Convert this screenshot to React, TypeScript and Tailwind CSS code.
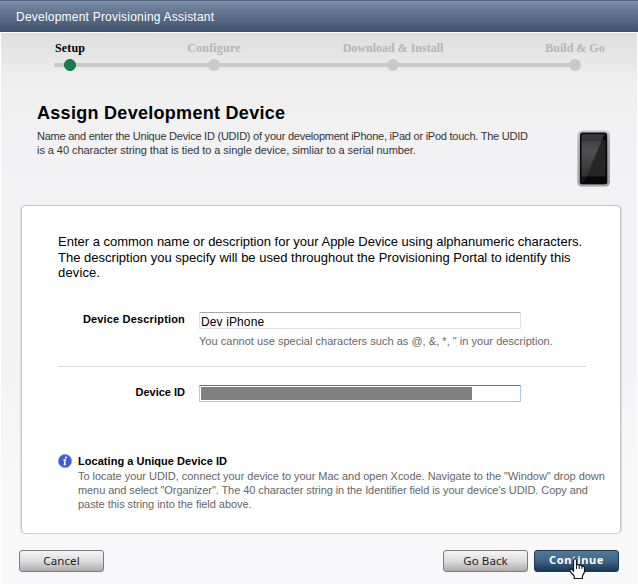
import type { ReactNode } from 'react';

const sans = "font-['Liberation_Sans',Arial,sans-serif]";

function Step({ label, active, className }: { label: string; active?: boolean; className: string }) {
  return (
    <div className={`relative flex flex-col items-center ${className}`}>
      <span
        className={`h-[14px] whitespace-nowrap font-['Liberation_Serif',serif] text-[12px] leading-[14px] font-bold ${active ? 'text-black' : 'text-[#b5b5b5]'}`}
      >
        {label}
      </span>
      <span
        className={`mt-1 size-3 rounded-full ${active ? 'border border-[#16693c] bg-[#1d7d4a]' : 'bg-[#c9c9c9]'}`}
      />
    </div>
  );
}

function Line({ children, className }: { children: ReactNode; className: string }) {
  return <span className={`block whitespace-nowrap ${className}`}>{children}</span>;
}

function DeviceIcon() {
  return (
    <svg width="34" height="58" viewBox="0 0 34 58">
      <defs>
        <linearGradient id="rim" x1="0" y1="0" x2="0" y2="1">
          <stop offset="0" stopColor="#d8d8d8" />
          <stop offset="0.2" stopColor="#aaa6a7" />
          <stop offset="1" stopColor="#8c898a" />
        </linearGradient>
        <linearGradient id="glare" x1="0" y1="0" x2="0" y2="1">
          <stop offset="0" stopColor="#38393b" />
          <stop offset="0.35" stopColor="#555557" />
          <stop offset="1" stopColor="#2b2b2b" />
        </linearGradient>
      </defs>
      <rect x="0.5" y="0.5" width="32.5" height="56" rx="4.5" fill="url(#rim)" />
      <rect x="1.3" y="1.3" width="30.8" height="54.2" rx="4" fill="none" stroke="#bdbabb" strokeWidth="0.8" />
      <rect x="3" y="2.6" width="27.2" height="51.6" rx="2.5" fill="#070707" />
      <rect x="4.6" y="10" width="24" height="36.5" fill="#262627" />
      <path d="M4.6 4H27.5L9.5 46.5L6.5 52H4.6Z" fill="url(#glare)" opacity="0.9" />
      <path d="M4 46.5H9.5L6 53H4Z" fill="#111" opacity="0.7" />
      <path d="M4 10H29" stroke="#151719" strokeWidth="1" opacity="0.5" />
    </svg>
  );
}

function InfoIcon() {
  return (
    <svg width="14" height="14" viewBox="0 0 14 14">
      <circle cx="7" cy="7" r="6.6" fill="#405bd2" stroke="#8996d4" strokeWidth="0.8" />
      <circle cx="7.9" cy="3.6" r="1.1" fill="#fff" />
      <path d="M5.4 6H7.3L6.4 10.5H8" fill="none" stroke="#fff" strokeWidth="1.4" />
    </svg>
  );
}

function HandCursor() {
  return (
    <svg className="absolute top-[7px] left-[34px]" width="17" height="22" viewBox="0 0 17 22">
      <path
        d="M4.5 13V2.5Q4.5 .7 6 .7T7.5 2.5V7Q9.6 5.9 10.2 7.5Q12.4 6.6 12.9 8.5Q15.5 7.8 15.5 10.2V14L13.4 18V20.5H5.2V18L1 13.2Q.3 11.7 1.5 11.2Q2.9 10.8 4.5 13Z"
        fill="#fff"
        stroke="#171717"
        strokeWidth="1.2"
      />
      <path d="M7.5 7V11M10.2 8V11M12.9 9V11" stroke="#171717" fill="none" />
    </svg>
  );
}

const lucida = "font-['Lucida_Grande','Noto_Sans',sans-serif]";
const grayButton = `flex h-[22px] w-[85px] items-center justify-center rounded-[3px] border border-[#7b7b7b] bg-linear-to-b from-[#f5f5f5] via-[#dcdcdc] to-[#afadae] text-[11.5px] tracking-[0.1px] text-[#222] ${lucida}`;

export default function App() {
  return (
    <div className={`flex h-[584px] w-[638px] flex-col overflow-hidden bg-[#3e526b] ${sans}`}>
      <header className="flex h-8 shrink-0 items-center border-t border-[#52647e] bg-linear-to-b from-[#7a8ca5] via-[#5b6f88] to-[#3e526b] pl-4 shadow-[inset_0_1px_0_#8495af]">
        <h1 className="text-[12px] leading-4 whitespace-nowrap text-white tracking-[0.22px]">
          Development Provisioning Assistant
        </h1>
      </header>
      <main className="flex flex-1 flex-col border-x border-t border-white bg-[linear-gradient(180deg,#dedede_0px,#eeeeee_45px,#f2f2f4_110px,#f4f4f6_340px,#f9f9fb_470px,#f9f9fb_100%)]">
        <nav className="relative mt-2 flex h-[30px] pl-[53px]">
          <span className="absolute top-[22px] left-[53px] h-1 w-[526px] bg-[#cacaca]" />
          <Step label="Setup" active className="w-8 tracking-[0.15px]" />
          <Step label="Configure" className="ml-[101px] w-[54px] tracking-[0.2px]" />
          <Step label="Download & Install" className="ml-[102px] w-[100px]" />
          <Step label="Build & Go" className="ml-[102px] w-[60px]" />
        </nav>
        <section className="mt-[31px] flex h-[86px] pl-9">
          <div className="w-[540px]">
            <h2 className="text-[18px] leading-[22px] font-bold tracking-[0.29px] whitespace-nowrap text-black">
              Assign Development Device
            </h2>
            <p className="mt-[5px] text-[11px] leading-[14px] text-[#333]">
              <Line className="tracking-[-0.235px]">Name and enter the Unique Device ID (UDID) of your development iPhone, iPad or iPod touch. The UDID</Line>
              <Line className="tracking-[-0.06px]">is a 40 character string that is tied to a single device, simliar to a serial number.</Line>
            </p>
          </div>
          <div className="pt-[28px]">
            <DeviceIcon />
          </div>
        </section>
        <section className="mt-[17px] ml-[20px] flex h-[329px] w-[600px] flex-col rounded-[5px] border border-[#c3c3c5] border-b-[#d2d2d4] bg-white pl-9 shadow-[1px_0_1px_#ddd,-1px_0_1px_#e2e2e4]">
          <p className="mt-[28px] text-[13px] leading-[15.5px] text-black">
            <Line className="tracking-[-0.006px]">Enter a common name or description for your Apple Device using alphanumeric characters.</Line>
            <Line className="tracking-[0.01px]">The description you specify will be used throughout the Provisioning Portal to identify this</Line>
            <Line className="tracking-[0.15px]">device.</Line>
          </p>
          <div className="mt-[31px] flex h-[55px] w-[528px] border-b border-[#dcdcdc]">
            <label className="mr-[14px] w-[127px] text-right text-[11px] leading-[14px] font-bold tracking-[0.17px] whitespace-nowrap text-black">
              Device Description
            </label>
            <div>
              <div className="flex h-[17px] w-[322px] items-center rounded-[1px] border border-[#dde1ea] border-t-[#a5a8b2] pl-px text-[12px] tracking-[0.12px] whitespace-nowrap text-black">
                <span className="pt-[3px]">Dev iPhone</span>
              </div>
              <p className="mt-[5px] text-[11px] leading-[14px] tracking-[0.03px] whitespace-nowrap text-[#666]">
                You cannot use special characters such as @, &amp;, *, " in your description.
              </p>
            </div>
          </div>
          <div className="mt-[18px] flex h-[17px]">
            <label className="mr-[14px] w-[127px] text-right text-[11px] leading-[14px] font-bold whitespace-nowrap text-black">
              Device ID
            </label>
            <div className="h-[17px] w-[322px] rounded-[1px] border border-[#adcce2] border-t-[#4279a5] p-px">
              <div className="h-[13px] w-[271px] bg-[#808080]" />
            </div>
          </div>
          <div className="mt-[52px] flex gap-[6px]">
            <div>
              <InfoIcon />
            </div>
            <div>
              <h3 className="text-[11px] leading-[15px] font-bold tracking-[0.04px] whitespace-nowrap text-black">Locating a Unique Device ID</h3>
              <p className="text-[11px] leading-[14px] text-[#666]">
                <Line className="tracking-[-0.037px]">To locate your UDID, connect your device to your Mac and open Xcode. Navigate to the "Window" drop down</Line>
                <Line className="tracking-[-0.08px]">menu and select "Organizer". The 40 character string in the Identifier field is your device's UDID. Copy and</Line>
                <Line className="tracking-[-0.05px]">paste this string into the field above.</Line>
              </p>
            </div>
          </div>
        </section>
        <footer className="mt-[16px] flex pl-[18px]">
          <button className={grayButton}>Cancel</button>
          <button className={`ml-[339px] ${grayButton}`}>Go Back</button>
          <button className={`relative ml-[6px] flex h-[22px] w-[85px] items-center justify-center rounded-[3px] border border-[#1f3a59] bg-linear-to-b from-[#527996] via-[#3e6585] to-[#193657] pb-[2px] text-[11px] font-bold tracking-[0.6px] text-white ${lucida}`}>
            Continue
            <HandCursor />
          </button>
        </footer>
      </main>
    </div>
  );
}
